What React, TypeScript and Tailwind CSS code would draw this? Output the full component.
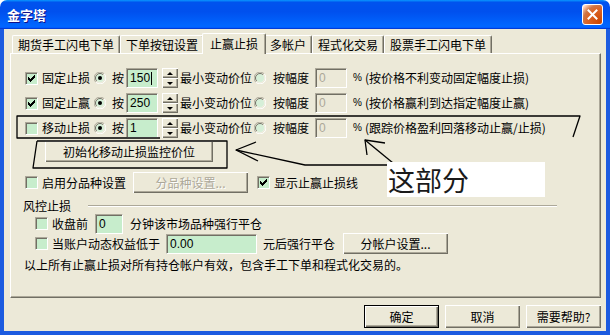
import React from "react";

const raised =
  "bg-[#ECE9D8] shadow-[inset_1px_1px_0_#ffffff,inset_-1px_-1px_0_#716F64,inset_-2px_-2px_0_#ACA899]";
const sunken =
  "border border-t-[#ACA899] border-l-[#ACA899] border-r-white border-b-white shadow-[inset_1px_1px_0_#716F64]";

function Check({ checked }: { checked?: boolean }) {
  const ys = [2, 3, 4, 3, 2, 1, 0];
  return (
    <span className={`relative block w-[13px] h-[13px] shrink-0 bg-[#C7EDCC] ${sunken}`}>
      {checked && (
        <svg className="absolute left-[2px] top-[2px]" width="7" height="7" viewBox="0 0 7 7" shapeRendering="crispEdges">
          {ys.map((y, i) => (
            <rect key={i} x={i} y={y} width="1" height="3" fill="#000" />
          ))}
        </svg>
      )}
    </span>
  );
}

function Radio({ checked, className = "" }: { checked?: boolean; className?: string }) {
  return (
    <svg className={`block shrink-0 ${className}`} width="12" height="12" viewBox="0 0 12 12">
      <path d="M10.2 1.8 A5.9 5.9 0 0 0 1.8 10.2" stroke="#ACA899" strokeWidth="1" fill="none" />
      <path d="M1.8 10.2 A5.9 5.9 0 0 0 10.2 1.8" stroke="#ffffff" strokeWidth="1" fill="none" />
      <circle cx="6" cy="6" r="4.6" fill="#D6EFD8" />
      <path d="M9.2 2.8 A4.5 4.5 0 0 0 2.8 9.2" stroke="#716F64" strokeWidth="1" fill="none" />
      <path d="M2.8 9.2 A4.5 4.5 0 0 0 9.2 2.8" stroke="#F1EFE2" strokeWidth="1" fill="none" />
      {checked && <circle cx="6" cy="6" r="2" fill="#000" />}
    </svg>
  );
}

function Spin({ className = "" }: { className?: string }) {
  return (
    <div className={`flex flex-col w-[16px] h-[20px] shrink-0 ${className}`}>
      <div className={`h-[10px] flex items-center justify-center ${raised}`}>
        <span className="block w-0 h-0 border-x-[3px] border-x-transparent border-b-[3px] border-b-black" />
      </div>
      <div className={`h-[10px] flex items-center justify-center ${raised}`}>
        <span className="block w-0 h-0 border-x-[3px] border-x-transparent border-t-[3px] border-t-black" />
      </div>
    </div>
  );
}

function Field({
  className = "",
  value,
  disabled,
  cursor,
}: {
  className?: string;
  value: string;
  disabled?: boolean;
  cursor?: boolean;
}) {
  return (
    <div
      className={`h-[20px] shrink-0 flex items-center pl-[3px] font-['Liberation_Sans',sans-serif] text-[12px] ${sunken} ${
        disabled ? "bg-[#ECE9D8] text-[#ACA899]" : "bg-[#C7EDCC] text-black"
      } ${className}`}
    >
      <span>{value}</span>
      {cursor && <span className="block w-px h-[13px] bg-black ml-px" />}
    </div>
  );
}

function ParamRow({
  checked,
  label,
  value,
  note,
  cursor,
}: {
  checked?: boolean;
  label: string;
  value: string;
  note: string;
  cursor?: boolean;
}) {
  return (
    <div className="flex items-center h-[20px] pl-[14px] whitespace-nowrap">
      <Check checked={checked} />
      <span className="ml-[4px]">{label}</span>
      <Radio className="ml-[4px]" checked />
      <span className="ml-[6px]">按</span>
      <Field className="ml-[2px] w-[32px]" value={value} cursor={cursor} />
      <Spin className="ml-[4px]" />
      <span className="ml-[2px]">最小变动价位</span>
      <Radio className="ml-[2px]" />
      <span className="ml-[7px]">按幅度</span>
      <Field className="ml-[6px] w-[32px]" value="0" disabled />
      <span className="ml-[6px] text-[10px] font-['Liberation_Sans',sans-serif]">%</span>
      <span className="ml-[3px]">({note})</span>
    </div>
  );
}

function Tab({ label, active }: { label: string; active?: boolean }) {
  if (active) {
    return (
      <div className="relative z-20 -mx-[2px] mb-[-1px] h-[21px] px-[7px] flex items-center bg-[#ECE9D8] border-l border-t border-l-white border-t-white border-r border-r-[#716F64] rounded-t-[2px] shadow-[inset_-1px_0_0_#ACA899] whitespace-nowrap">
        {label}
      </div>
    );
  }
  return (
    <div className="h-[18px] px-[5px] flex items-center bg-[#ECE9D8] border-l border-t border-l-white border-t-white border-r border-r-[#716F64] rounded-t-[2px] shadow-[inset_-1px_0_0_#ACA899] whitespace-nowrap">
      {label}
    </div>
  );
}

function Btn({
  children,
  className = "",
  disabled,
  isDefault,
}: {
  children: React.ReactNode;
  className?: string;
  disabled?: boolean;
  isDefault?: boolean;
}) {
  return (
    <div
      className={`shrink-0 flex items-center justify-center whitespace-nowrap ${raised} ${
        isDefault ? "border border-black" : ""
      } ${disabled ? "text-[#ACA899] [text-shadow:1px_1px_0_#ffffff]" : "text-black"} ${className}`}
    >
      {children}
    </div>
  );
}

export default function App() {
  return (
    <div className="relative w-[610px] h-[335px] flex flex-col overflow-hidden bg-white text-[12px] leading-[14px] text-black font-['Noto_Sans_CJK_SC','Noto_Sans',sans-serif]">
      {/* title bar */}
      <div className="h-[29px] shrink-0 rounded-t-[7px] bg-[linear-gradient(180deg,#0997ff,#0053ee_8%,#0050ee_40%,#06f_88%,#06f_93%,#005bff_95%,#003dd7_96%,#003dd7)] flex items-center pl-[7px] pr-[7px]">
        <span className="text-white font-bold text-[13px] [text-shadow:1px_1px_0_#0f1089]">金字塔</span>
        <div className="ml-auto w-[21px] h-[21px] rounded-[3px] border border-white bg-[radial-gradient(circle_at_90%_90%,#cc4600_0%,#dc6527_55%,#cd7546_70%,#ffccb2_90%,#ffffff_100%)] flex items-center justify-center">
          <svg width="11" height="11" viewBox="0 0 11 11">
            <path d="M1.5 1.5 L9.5 9.5 M9.5 1.5 L1.5 9.5" stroke="#ffffff" strokeWidth="2" strokeLinecap="square" />
          </svg>
        </div>
      </div>

      {/* window frame */}
      <div className="flex-1 flex flex-col bg-[#1C5BE0] px-[4px] pb-[4px]">
        <div className="flex-1 flex flex-col bg-[#ECE9D8]">
          {/* tabs */}
          <div className="relative z-10 flex items-end h-[24px] pl-[8px]">
            <Tab label="期货手工闪电下单" />
            <Tab label="下单按钮设置" />
            <Tab label="止赢止损" active />
            <Tab label="多帐户" />
            <Tab label="程式化交易" />
            <Tab label="股票手工闪电下单" />
          </div>

          {/* panel */}
          <div className="ml-[6px] mr-[5px] h-[245px] shrink-0 flex flex-col pt-[14px] border border-t-white border-l-white border-r-[#716F64] border-b-[#716F64] shadow-[inset_-1px_-1px_0_#ACA899]">
            <ParamRow checked label="固定止损" value="150" cursor note="按价格不利变动固定幅度止损" />
            <div className="mt-[5px]">
              <ParamRow checked label="固定止赢" value="250" note="按价格赢利到达指定幅度止赢" />
            </div>
            <div className="mt-[5px]">
              <ParamRow label="移动止损" value="1" note="跟踪价格盈利回落移动止赢/止损" />
            </div>

            <div className="mt-[3px] pl-[34px] flex">
              <Btn className="w-[168px] h-[21px]">初始化移动止损监控价位</Btn>
            </div>

            <div className="mt-[10px] h-[21px] pl-[14px] flex items-center whitespace-nowrap">
              <Check />
              <span className="ml-[4px]">启用分品种设置</span>
              <Btn disabled className="ml-[7px] w-[115px] h-[21px]">
                分品种设置...
              </Btn>
              <span className="ml-[9px]">
                <Check checked />
              </span>
              <span className="ml-[4px]">显示止赢止损线</span>
            </div>

            <div className="mt-[5px] h-[16px] pl-[12px] pr-[43px] flex items-center">
              <span>风控止损</span>
              <div className="ml-[17px] flex-1 h-[2px] border-t border-t-[#ACA899] border-b border-b-white" />
            </div>

            <div className="h-[19px] pl-[24px] flex items-center whitespace-nowrap">
              <Check />
              <span className="ml-[4px]">收盘前</span>
              <Field className="ml-[7px] w-[28px] h-[19px]" value="0" />
              <span className="ml-[7px]">分钟该市场品种强行平仓</span>
            </div>

            <div className="h-[21px] pl-[24px] flex items-center whitespace-nowrap">
              <Check />
              <span className="ml-[4px]">当账户动态权益低于</span>
              <Field className="ml-[6px] w-[91px] h-[19px]" value="0.00" />
              <span className="ml-[6px]">元后强行平仓</span>
              <Btn className="ml-[8px] w-[105px] h-[21px]">分帐户设置...</Btn>
            </div>

            <div className="mt-[4px] h-[14px] pl-[13px] flex items-center whitespace-nowrap">
              以上所有止赢止损对所有持仓帐户有效，包含手工下单和程式化交易的。
            </div>
          </div>

          {/* bottom buttons */}
          <div className="mt-[7px] pr-[5px] flex justify-end gap-[6px]">
            <Btn isDefault className="w-[75px] h-[23px]">
              确定
            </Btn>
            <Btn className="w-[75px] h-[23px]">取消</Btn>
            <Btn className="w-[75px] h-[23px]">需要帮助?</Btn>
          </div>
        </div>
      </div>

      {/* hand-drawn annotation overlay */}
      <svg className="absolute left-0 top-0 pointer-events-none" width="610" height="335" viewBox="0 0 610 335">
        <g stroke="#000" strokeWidth="1.3" fill="none" strokeLinejoin="round">
          <polyline points="160,138 17,138 17,116 580,116 573,137" />
          <polyline points="37,141 227,141 227,168 33,168 37,141" />
          <polyline points="256,142 236,150 258,161" />
          <polyline points="236,150 305,165 388,165" />
          <polyline points="385,143 365,140 367,155" />
          <line x1="365" y1="140" x2="393" y2="163" />
        </g>
      </svg>
      <div className="absolute left-[387px] top-[162px] w-[158px] h-[35px] bg-white flex items-center pl-[1px] text-[27px] leading-none text-[#1a1a1a] font-['Noto_Sans_CJK_SC',sans-serif]">
        这部分
      </div>
    </div>
  );
}
